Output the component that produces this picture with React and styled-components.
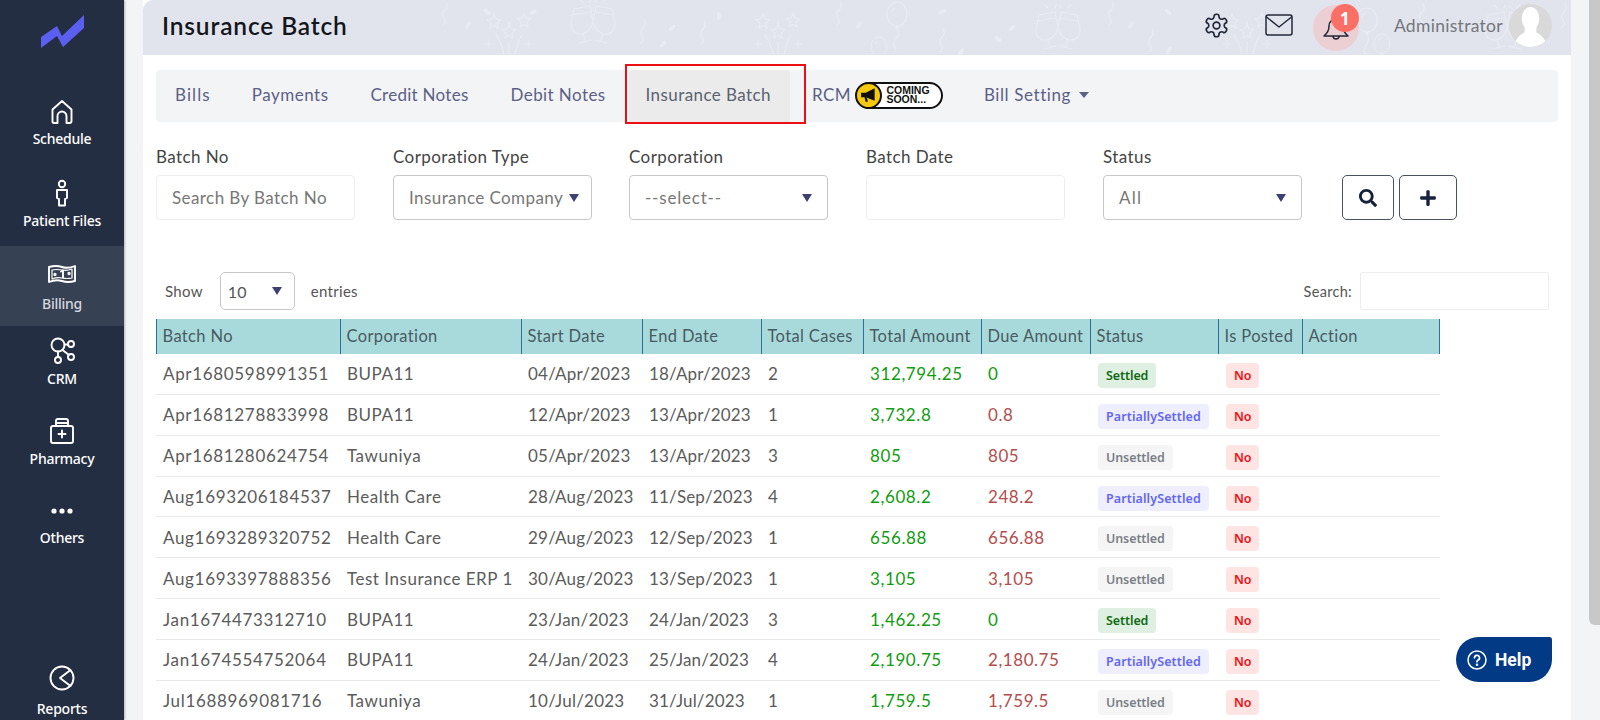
import React from 'react';
import styled, { createGlobalStyle } from 'styled-components';
import { FaSearch, FaPlus } from 'react-icons/fa';

const Global = createGlobalStyle`
  html, body { margin: 0; padding: 0; height: 720px; overflow: hidden; background: #f3f4f6; }
  body { font-family: "Lato", "Noto Sans", sans-serif; color: #555; }
  * { box-sizing: border-box; }
`;

const Page = styled.div`display: flex; width: 1600px; height: 720px; overflow: hidden; background: #f3f4f6;`;
const Sidebar = styled.nav`
  width: 124px; flex: none; height: 720px; background: #242e43; display: flex; flex-direction: column;
  align-items: stretch; box-shadow: 1px 0 2px rgba(0,0,0,.25); overflow: hidden;
`;
const LogoBox = styled.div`height: 86px; flex: none; display: flex; justify-content: center; padding-top: 15px;`;
const NavItem = styled.div`
  height: 80px; flex: none; display: flex; flex-direction: column; align-items: center; gap: ${p => p.$gap || 1}px;
  padding-top: ${p => p.$top || 10}px;
  background: ${p => p.$active ? '#364154' : 'transparent'};
  margin-top: ${p => p.$push || 0}px;
  color: ${p => p.$active ? '#d5d8de' : '#fff'};
  font: 500 14px "Noto Sans", sans-serif; letter-spacing: -.25px;
`;
const NavIcon = styled.svg`width: 32px; height: 32px; flex: none; fill: none; stroke: #fff; stroke-width: 1.9; stroke-linecap: round; stroke-linejoin: round;`;

const Main = styled.main`width: 1428px; margin-left: 19px; flex: none; height: 720px; background: #fff; display: flex; flex-direction: column; overflow: hidden;`;
const Header = styled.header`
  position: relative; height: 55px; flex: none; background: #e1e4ed; border-radius: 10px 0 0 0; display: flex; align-items: center;
  padding: 0 0 0 19px; overflow: hidden;
`;
const Decor = styled.svg`position: absolute; left: 0; top: 0; width: 1428px; height: 55px; fill: none; stroke: #e9ebf2; stroke-width: 1.2; stroke-linecap: round; stroke-linejoin: round;`;
const Title = styled.h1`position: relative; margin: 0 0 5px; font: 600 24.5px "Lato", sans-serif; color: #15161c; letter-spacing: .85px;`;
const HeaderTools = styled.div`position: relative; margin-left: auto; display: flex; align-items: center; height: 55px; padding-bottom: 5px;`;
const ToolIcon = styled.svg`width: ${p => p.$w || 26}px; height: ${p => p.$h || 26}px; margin-left: ${p => p.$ml || 0}px; fill: none; stroke: #23283a; stroke-width: 1.5; stroke-linecap: round; stroke-linejoin: round; flex: none;`;
const BellWrap = styled.div`
  position: relative; width: 46px; height: 46px; border-radius: 50%; background: #eccfd3; margin: 6px 0 0 20px;
  display: flex; align-items: center; justify-content: center; flex: none;
`;
const BellBadge = styled.span`
  position: absolute; left: 18px; top: -1px; width: 28px; height: 28px; border-radius: 50%; background: #fb6f67; color: #fff;
  font: 700 17px "Noto Sans", sans-serif; display: flex; align-items: center; justify-content: center;
`;
const AdminName = styled.span`font-size: 17.5px; color: #74767c; margin-left: 35px; letter-spacing: .3px;`;
const Avatar = styled.svg`width: 43px; height: 43px; margin: 0 19px 0 6px; flex: none;`;

const TabBar = styled.div`
  margin: 15px 13px 0; height: 52px; flex: none; background: #f3f4f6; border-radius: 4px; display: flex; align-items: center; position: relative;
`;
const Tab = styled.div`
  height: 52px; display: flex; align-items: center; font-size: 17px; color: ${p => p.$active ? '#5b6170' : '#5c6086'};
  padding: 0 ${p => p.$padR ?? 21}px 3px ${p => p.$padL ?? 21}px; background: ${p => p.$active ? '#ebebeb' : 'transparent'}; letter-spacing: ${p => p.$ls ?? .42}px;
  border-radius: ${p => p.$active ? '4px 4px 0 0' : 0}; position: relative; flex: none; margin-left: ${p => p.$ml || 0}px;
`;
const Highlight = styled.span`position: absolute; left: -4px; right: -16px; top: -6px; bottom: -2px; border: 2px solid #ee0f14; pointer-events: none;`;
const Caret = styled.span`width: 0; height: 0; border: 5px solid transparent; border-top: 6px solid #5c6086; border-bottom: 0; margin-left: 8px;`;

const Soon = styled.div`
  margin-left: 5px; width: 87px; height: 27px; border: 2.5px solid #111; border-radius: 14px; background: #fff; display: flex; align-items: center; flex: none; margin-bottom: 2px;
`;
const SoonIcon = styled.div`width: 27px; height: 27px; margin-left: -2.5px; border-radius: 50%; background: #f6c90e; border: 2.5px solid #111; flex: none; display: flex; align-items: center; justify-content: center;`;
const SoonText = styled.div`font: 700 10.5px/9.5px "Liberation Sans", sans-serif; color: #111; margin-left: 4px; letter-spacing: 0; white-space: pre;`;

const Filters = styled.div`display: flex; margin: 25px 0 0 13px; align-items: flex-start; flex: none;`;
const Field = styled.div`width: ${p => p.$w || 199}px; margin-right: ${p => p.$mr ?? 37}px; flex: none;`;
const Label = styled.div`font-size: 17px; line-height: 20px; color: #444; letter-spacing: .42px; margin-bottom: 8px;`;
const Input = styled.div`
  height: 45px; border: 1px solid ${p => p.$select ? '#c6c7ca' : '#eeeef0'}; border-radius: 4px; display: flex; align-items: center; padding: 0 15px;
  font-size: 17px; color: #777; letter-spacing: ${p => p.$ls ?? .42}px; white-space: nowrap; background: #fff;
`;
const SelectArrow = styled.span`
  width: 0; height: 0; border-left: 5px solid transparent; border-right: 5px solid transparent; border-top: 8px solid #3e3f73; margin-left: auto; margin-right: ${p => p.$mr ?? 0}px; flex: none;
`;
const IconBtn = styled.button`
  width: ${p => p.$w}px; height: 45px; border: 1px solid #4a5260; border-radius: 5px; background: #fff; display: flex; align-items: center; justify-content: center;
  color: #16223c; font-size: 18px; margin-left: ${p => p.$ml}px; padding: 0; flex: none;
`;
const FilterBtns = styled.div`display: flex; margin-top: 28px; margin-left: 3px;`;

const TableTools = styled.div`display: flex; align-items: center; height: 38px; margin: 52px 22px 0 22px; flex: none; font-size: 15px; color: #555; letter-spacing: .3px;`;
const SmallSelect = styled.div`width: 75px; height: 38px; margin: 0 16px 0 17px; border: 1px solid #c6c7ca; border-radius: 5px; display: flex; align-items: center; padding: 0 12px 0 7px; font-size: 16px;`;
const SearchLabel = styled.span`margin-left: auto; font-size: 14.5px;`;
const SearchInput = styled.div`width: 189px; height: 38px; margin-left: 8px; border: 1px solid #eeeef0; border-radius: 2px;`;

const Table = styled.div`width: 1284px; margin: 9px 0 0 13px; flex: none;`;
const cols = '184px 181px 121px 119px 102px 118px 109px 128px 84px 138px';
const HeadRow = styled.div`display: grid; grid-template-columns: ${cols}; height: 35px; background: #a8dadc; border-right: 1px solid #2f6f9f;`;
const HeadCell = styled.div`border-left: 1.5px solid #2f6f9f; padding: 0 0 2px 5.5px; display: flex; align-items: center; font-size: 16.5px; color: #4a5a62; letter-spacing: .36px; white-space: nowrap;`;
const Row = styled.div`display: grid; grid-template-columns: ${cols}; height: 40.86px; border-bottom: 1px solid #e9e9e9; align-items: center;`;
const Cell = styled.div`padding-left: 7px; font-size: 17px; letter-spacing: ${p => p.$ls ?? .42}px; color: ${p => p.$color || '#5b5b5b'}; white-space: nowrap;`;
const Badge = styled.span`
  display: inline-flex; align-items: center; height: 25px; padding: 0 8px; border-radius: 4px; font: 600 12.5px "Noto Sans", sans-serif; letter-spacing: ${p => p.$ls ?? -.1}px;
  background: ${p => p.$bg}; color: ${p => p.$fg};
`;
const BadgeCell = styled.div`padding: 3px 0 0 8px; display: flex;`;

const ScrollTrack = styled.div`width: 29px; flex: none; height: 720px; padding: 0 0 0 18px;`;
const ScrollThumb = styled.div`width: 11px; height: 625px; background: #c8c8c8; border-radius: 0 0 0 6px;`;

const Help = styled.div`
  position: absolute; left: 1456px; top: 637px; width: 96px; height: 45px; background: #023a85; border-radius: 24px 3px 24px 24px; color: #fff;
  display: flex; align-items: center; padding-left: 11px; gap: 8px; font: 700 17.5px "Roboto", sans-serif;
`;

const Glasses = ({ x, y = 0 }) => (
  <g transform={`translate(${x - 143},${y})`}>
    <path d="M-19 9l16 -3 3 16q-3 11-12 12 -10 0-10-11zM19 9l-16 -3 -3 16q3 11 12 12 10 0 10-11zM-21 15l18-3M21 15l-18-3" />
    <path d="M-10 34l3 8M-14 43l12-3M10 34l-3 8M14 43l-12-3M-10 2l-3-3M10 2l3-3M-3 2l1-3M3 2l-1-3" />
  </g>
);
const Firework = ({ x }) => (
  <g transform={`translate(${x - 143},0)`}>
    <path d="M-15 14l2 5 5 .5-4 3.500 1 5-4-2.500-4 2.500 1-5-4-3.500 5-.500zM15 13l2 5 5 .5-4 3.500 1 5-4-2.500-4 2.500 1-5-4-3.500 5-.500zM0 24l2 5 5 .5-4 3.500 1 5-4-2.500-4 2.500 1-5-4-3.500 5-.500z" />
    <path d="M-13 35q6 8 8 20M13 35q-5 8-7 20M0 42v13M-24 44h8M-20 40v8M24 44h-8M20 40v8M0 26v-4" />
  </g>
);
const Balloon = ({ x, y, s = 1 }) => (
  <g transform={`translate(${x - 143},${y}) scale(${s})`}>
    <ellipse cx="0" cy="12" rx="10" ry="12" />
    <path d="M0 24l-1 2h2zM0 26q3 6-1 11t0 10M-5 9q1-3 3-3" />
  </g>
);
const Squiggle = ({ x, y }) => <path transform={`translate(${x - 143},${y})`} d="M3 0q3 4-1 8t-1 8 -1 7" />;
const Confetti = ({ x, y, r = 30 }) => <ellipse transform={`translate(${x - 143},${y}) rotate(${r})`} rx="4" ry="2" fill="#e9ebf2" stroke="none" />;

const HeaderDecor = () => (
  <Decor viewBox="0 0 1428 55" aria-hidden="true">
    <Squiggle x={443} y={2} /><Confetti x={487} y={12} r={35} /><Confetti x={468} y={25} r={-60} /><Confetti x={533} y={12} r={-30} />
    <Firework x={509} /><Glasses x={593} /><Squiggle x={641} y={20} /><Confetti x={672} y={28} r={-40} /><Confetti x={663} y={44} r={-50} />
    <Squiggle x={701} y={21} /><Confetti x={719} y={16} r={90} /><Firework x={778} />
    <Squiggle x={837} y={2} /><Confetti x={859} y={25} r={-60} /><Balloon x={897} y={2} /><Balloon x={879} y={37} s={.8} />
    <Confetti x={942} y={12} r={-25} /><Squiggle x={940} y={29} /><Confetti x={961} y={52} r={-60} /><Confetti x={1012} y={28} r={-40} /><Confetti x={998} y={39} r={30} />
    <Glasses x={1058} y={6} /><Squiggle x={1109} y={2} /><Confetti x={1131} y={25} r={-60} /><Confetti x={1168} y={12} r={35} /><Squiggle x={1149} y={29} /><Confetti x={1169} y={50} r={-60} />
    <Firework x={1247} /><Balloon x={1367} y={8} /><Balloon x={1382} y={34} s={.8} /><Squiggle x={1420} y={4} /><Glasses x={1507} y={6} /><Squiggle x={1562} y={4} />
  </Decor>
);

const rows = [
  ['Apr1680598991351', 'BUPA11', '04/Apr/2023', '18/Apr/2023', '2', '312,794.25', '0', 'S'],
  ['Apr1681278833998', 'BUPA11', '12/Apr/2023', '13/Apr/2023', '1', '3,732.8', '0.8', 'P'],
  ['Apr1681280624754', 'Tawuniya', '05/Apr/2023', '13/Apr/2023', '3', '805', '805', 'U'],
  ['Aug1693206184537', 'Health Care', '28/Aug/2023', '11/Sep/2023', '4', '2,608.2', '248.2', 'P'],
  ['Aug1693289320752', 'Health Care', '29/Aug/2023', '12/Sep/2023', '1', '656.88', '656.88', 'U'],
  ['Aug1693397888356', 'Test Insurance ERP 1', '30/Aug/2023', '13/Sep/2023', '1', '3,105', '3,105', 'U'],
  ['Jan1674473312710', 'BUPA11', '23/Jan/2023', '24/Jan/2023', '3', '1,462.25', '0', 'S'],
  ['Jan1674554752064', 'BUPA11', '24/Jan/2023', '25/Jan/2023', '4', '2,190.75', '2,180.75', 'P'],
  ['Jul1688969081716', 'Tawuniya', '10/Jul/2023', '31/Jul/2023', '1', '1,759.5', '1,759.5', 'U'],
];
const statusMap = {
  S: { label: 'Settled', bg: '#dff0e3', fg: '#0f6b12' },
  P: { label: 'PartiallySettled', bg: '#eeeeff', fg: '#6366f1', ls: .1 },
  U: { label: 'Unsettled', bg: '#f5f5f5', fg: '#7a7f87' },
};
const heads = ['Batch No', 'Corporation', 'Start Date', 'End Date', 'Total Cases', 'Total Amount', 'Due Amount', 'Status', 'Is Posted', 'Action'];

const navItems = [
  { label: 'Schedule', icon: <path d="M6.500 26V13.500L16 5l9.500 8.500V25a2 2 0 0 1-2 2h-3v-7a4.500 4.500 0 0 0-9 0v7h-3a2 2 0 0 1-2-1z" /> },
  { label: 'Patient Files', icon: <><circle cx="16" cy="6" r="3.200" /><path d="M11 12h10v8l-2 1v6.500h-6V21l-2-1z" /></>, top: 12, gap: 1 },
  { label: 'Billing', active: true, top: 12, gap: 4, icon: <><path d="M3 9q7-2 13 0t13-1v15q-7 2-13 0t-13 1z" /><path d="M6 12q5-1 10 0t10-1v9q-5 1-10 0t-10 1z" strokeWidth="1.200" /><circle cx="9" cy="16.500" r=".7" /><circle cx="23" cy="15.500" r=".7" /><path d="M15 13.500l2-1v7" /></> },
  { label: 'CRM', top: 8, gap: 3, icon: <><circle cx="12" cy="11" r="6.500" /><circle cx="25" cy="10" r="3" /><circle cx="25" cy="23" r="3" /><circle cx="12" cy="26" r="3" /><path d="M18.500 10.500H22M16.500 16l6.500 5M12 17.500V23" /></> },
  { label: 'Pharmacy', top: 9, gap: 2, icon: <><rect x="5" y="11" width="22" height="17" rx="2" /><path d="M10 11V6a2 2 0 0 1 2-2h8a2 2 0 0 1 2 2v5M10 8h12M16 15.500v7M12.500 19h7" /></> },
  { label: 'Others', top: 9, gap: 1, icon: <g fill="#fff" stroke="none"><circle cx="8" cy="16" r="2.600" /><circle cx="16" cy="16" r="2.600" /><circle cx="24" cy="16" r="2.600" /></g> },
  { label: 'Reports', top: 16, gap: 5, push: 80, icon: <><circle cx="16" cy="16" r="11.500" /><path d="M24.500 8L14 16l10.500 8" /></> },
];

const Amount = '#109c10';
const Due = '#b34d4d';

export default function App() {
  return (
    <Page>
      <Global />
      <Sidebar>
        <LogoBox>
          <svg width="44" height="33" viewBox="0 0 44 33"><polygon points="1,22 17,11 22,21 44,0 44,13 23,32 17,21 1,33" fill="#5a5ff0" /></svg>
        </LogoBox>
        {navItems.map(n => (
          <NavItem key={n.label} $active={n.active} $top={n.top} $gap={n.gap} $push={n.push}>
            <NavIcon viewBox="0 0 32 32">{n.icon}</NavIcon>
            {n.label}
          </NavItem>
        ))}
      </Sidebar>
      <Main>
        <Header>
          <HeaderDecor />
          <Title>Insurance Batch</Title>
          <HeaderTools>
            <ToolIcon viewBox="0 0 24 24" $w={27} $h={27}>
              <path d="M12.220 2h-.440a2 2 0 0 0-2 2v.180a2 2 0 0 1-1 1.730l-.430.250a2 2 0 0 1-2 0l-.150-.080a2 2 0 0 0-2.730.730l-.220.380a2 2 0 0 0 .730 2.730l.150.100a2 2 0 0 1 1 1.720v.510a2 2 0 0 1-1 1.740l-.150.090a2 2 0 0 0-.730 2.730l.220.380a2 2 0 0 0 2.730.730l.150-.080a2 2 0 0 1 2 0l.430.250a2 2 0 0 1 1 1.730V20a2 2 0 0 0 2 2h.440a2 2 0 0 0 2-2v-.180a2 2 0 0 1 1-1.730l.430-.250a2 2 0 0 1 2 0l.150.080a2 2 0 0 0 2.730-.730l.220-.390a2 2 0 0 0-.730-2.730l-.150-.080a2 2 0 0 1-1-1.740v-.500a2 2 0 0 1 1-1.740l.150-.090a2 2 0 0 0 .730-2.730l-.220-.380a2 2 0 0 0-2.730-.730l-.150.080a2 2 0 0 1-2 0l-.430-.250a2 2 0 0 1-1-1.730V4a2 2 0 0 0-2-2z" />
              <circle cx="12" cy="12" r="3" />
            </ToolIcon>
            <ToolIcon viewBox="0 0 28 22" $w={28} $h={22} $ml={35}>
              <rect x="1" y="1" width="26" height="20" rx="2" />
              <path d="M1.500 3L14 13 26.500 3" />
            </ToolIcon>
            <BellWrap>
              <ToolIcon viewBox="0 0 26 26" $w={26} $h={26}>
                <path d="M1 21q5-4 5-10a7 7 0 0 1 14 0q0 6 5 10zM10 21a3 3 0 0 0 6 0" />
              </ToolIcon>
              <BellBadge>1</BellBadge>
            </BellWrap>
            <AdminName>Administrator</AdminName>
            <Avatar viewBox="0 0 44 44">
              <defs><clipPath id="av"><circle cx="22" cy="22" r="22" /></clipPath></defs>
              <circle cx="22" cy="22" r="22" fill="#d9d9d9" />
              <g clipPath="url(#av)" fill="#fff">
                <ellipse cx="22" cy="15" rx="9" ry="12" />
                <path d="M16 24h12v5q8 4 12 15H4q4-11 12-15z" />
              </g>
            </Avatar>
          </HeaderTools>
        </Header>

        <TabBar>
          <Tab $padL={19} $padR={20} $ls={1.1}>Bills</Tab>
          <Tab $ls={.5}>Payments</Tab>
          <Tab $ls={.27}>Credit Notes</Tab>
          <Tab>Debit Notes</Tab>
          <Tab $active $padL={17} $padR={19} $ml={2}>Insurance Batch<Highlight /></Tab>
          <Tab $padL={0} $padR={0} $ml={22}>RCM</Tab>
          <Soon>
            <SoonIcon>
              <svg width="18" height="16" viewBox="0 0 16 14"><path d="M1 5h4l8-4v11L5 9H1zM4 9l1 4h2L6 9z" fill="#111" /></svg>
            </SoonIcon>
            <SoonText>{'COMING\nSOON...'}</SoonText>
          </Soon>
          <Tab $ml={20} $ls={.6}>Bill Setting<Caret /></Tab>
        </TabBar>

        <Filters>
          <Field $mr={38}>
            <Label>Batch No</Label>
            <Input>Search By Batch No</Input>
          </Field>
          <Field>
            <Label>Corporation Type</Label>
            <Input $select>Insurance Company<SelectArrow $mr={-3} /></Input>
          </Field>
          <Field $mr={38}>
            <Label>Corporation</Label>
            <Input $select $ls={.8}>--select--<SelectArrow /></Input>
          </Field>
          <Field $mr={38}>
            <Label>Batch Date</Label>
            <Input />
          </Field>
          <Field>
            <Label>Status</Label>
            <Input $select $ls={1.2}>All<SelectArrow /></Input>
          </Field>
          <FilterBtns>
            <IconBtn $w={52} $ml={0}><FaSearch /></IconBtn>
            <IconBtn $w={58} $ml={5}><FaPlus /></IconBtn>
          </FilterBtns>
        </Filters>

        <TableTools>
          Show
          <SmallSelect>10<SelectArrow /></SmallSelect>
          entries
          <SearchLabel>Search:</SearchLabel>
          <SearchInput />
        </TableTools>

        <Table>
          <HeadRow>{heads.map(h => <HeadCell key={h}>{h}</HeadCell>)}</HeadRow>
          {rows.map(r => {
            const s = statusMap[r[7]];
            return (
              <Row key={r[0]}>
                <Cell $ls={.67}>{r[0]}</Cell>
                <Cell $ls={.52}>{r[1]}</Cell>
                <Cell $ls={.22}>{r[2]}</Cell>
                <Cell $ls={.16}>{r[3]}</Cell>
                <Cell>{r[4]}</Cell>
                <Cell $color={Amount} $ls={.6}>{r[5]}</Cell>
                <Cell $color={r[6] === '0' ? Amount : Due} $ls={.55}>{r[6]}</Cell>
                <BadgeCell><Badge $bg={s.bg} $fg={s.fg} $ls={s.ls}>{s.label}</Badge></BadgeCell>
                <BadgeCell><Badge $bg="#ffe4e4" $fg="#ee1111">No</Badge></BadgeCell>
                <div />
              </Row>
            );
          })}
        </Table>
      </Main>
      <ScrollTrack><ScrollThumb /></ScrollTrack>
      <Help>
        <svg width="20" height="20" viewBox="0 0 20 20" fill="none" stroke="#fff" strokeWidth="1.500" strokeLinecap="round">
          <circle cx="10" cy="10" r="9" />
          <path d="M7.500 7.800a2.500 2.500 0 1 1 3.600 2.300c-.8.400-1.100.9-1.100 1.700" strokeWidth="1.700" />
          <circle cx="10" cy="14.700" r=".5" />
        </svg>
        Help
      </Help>
    </Page>
  );
}
